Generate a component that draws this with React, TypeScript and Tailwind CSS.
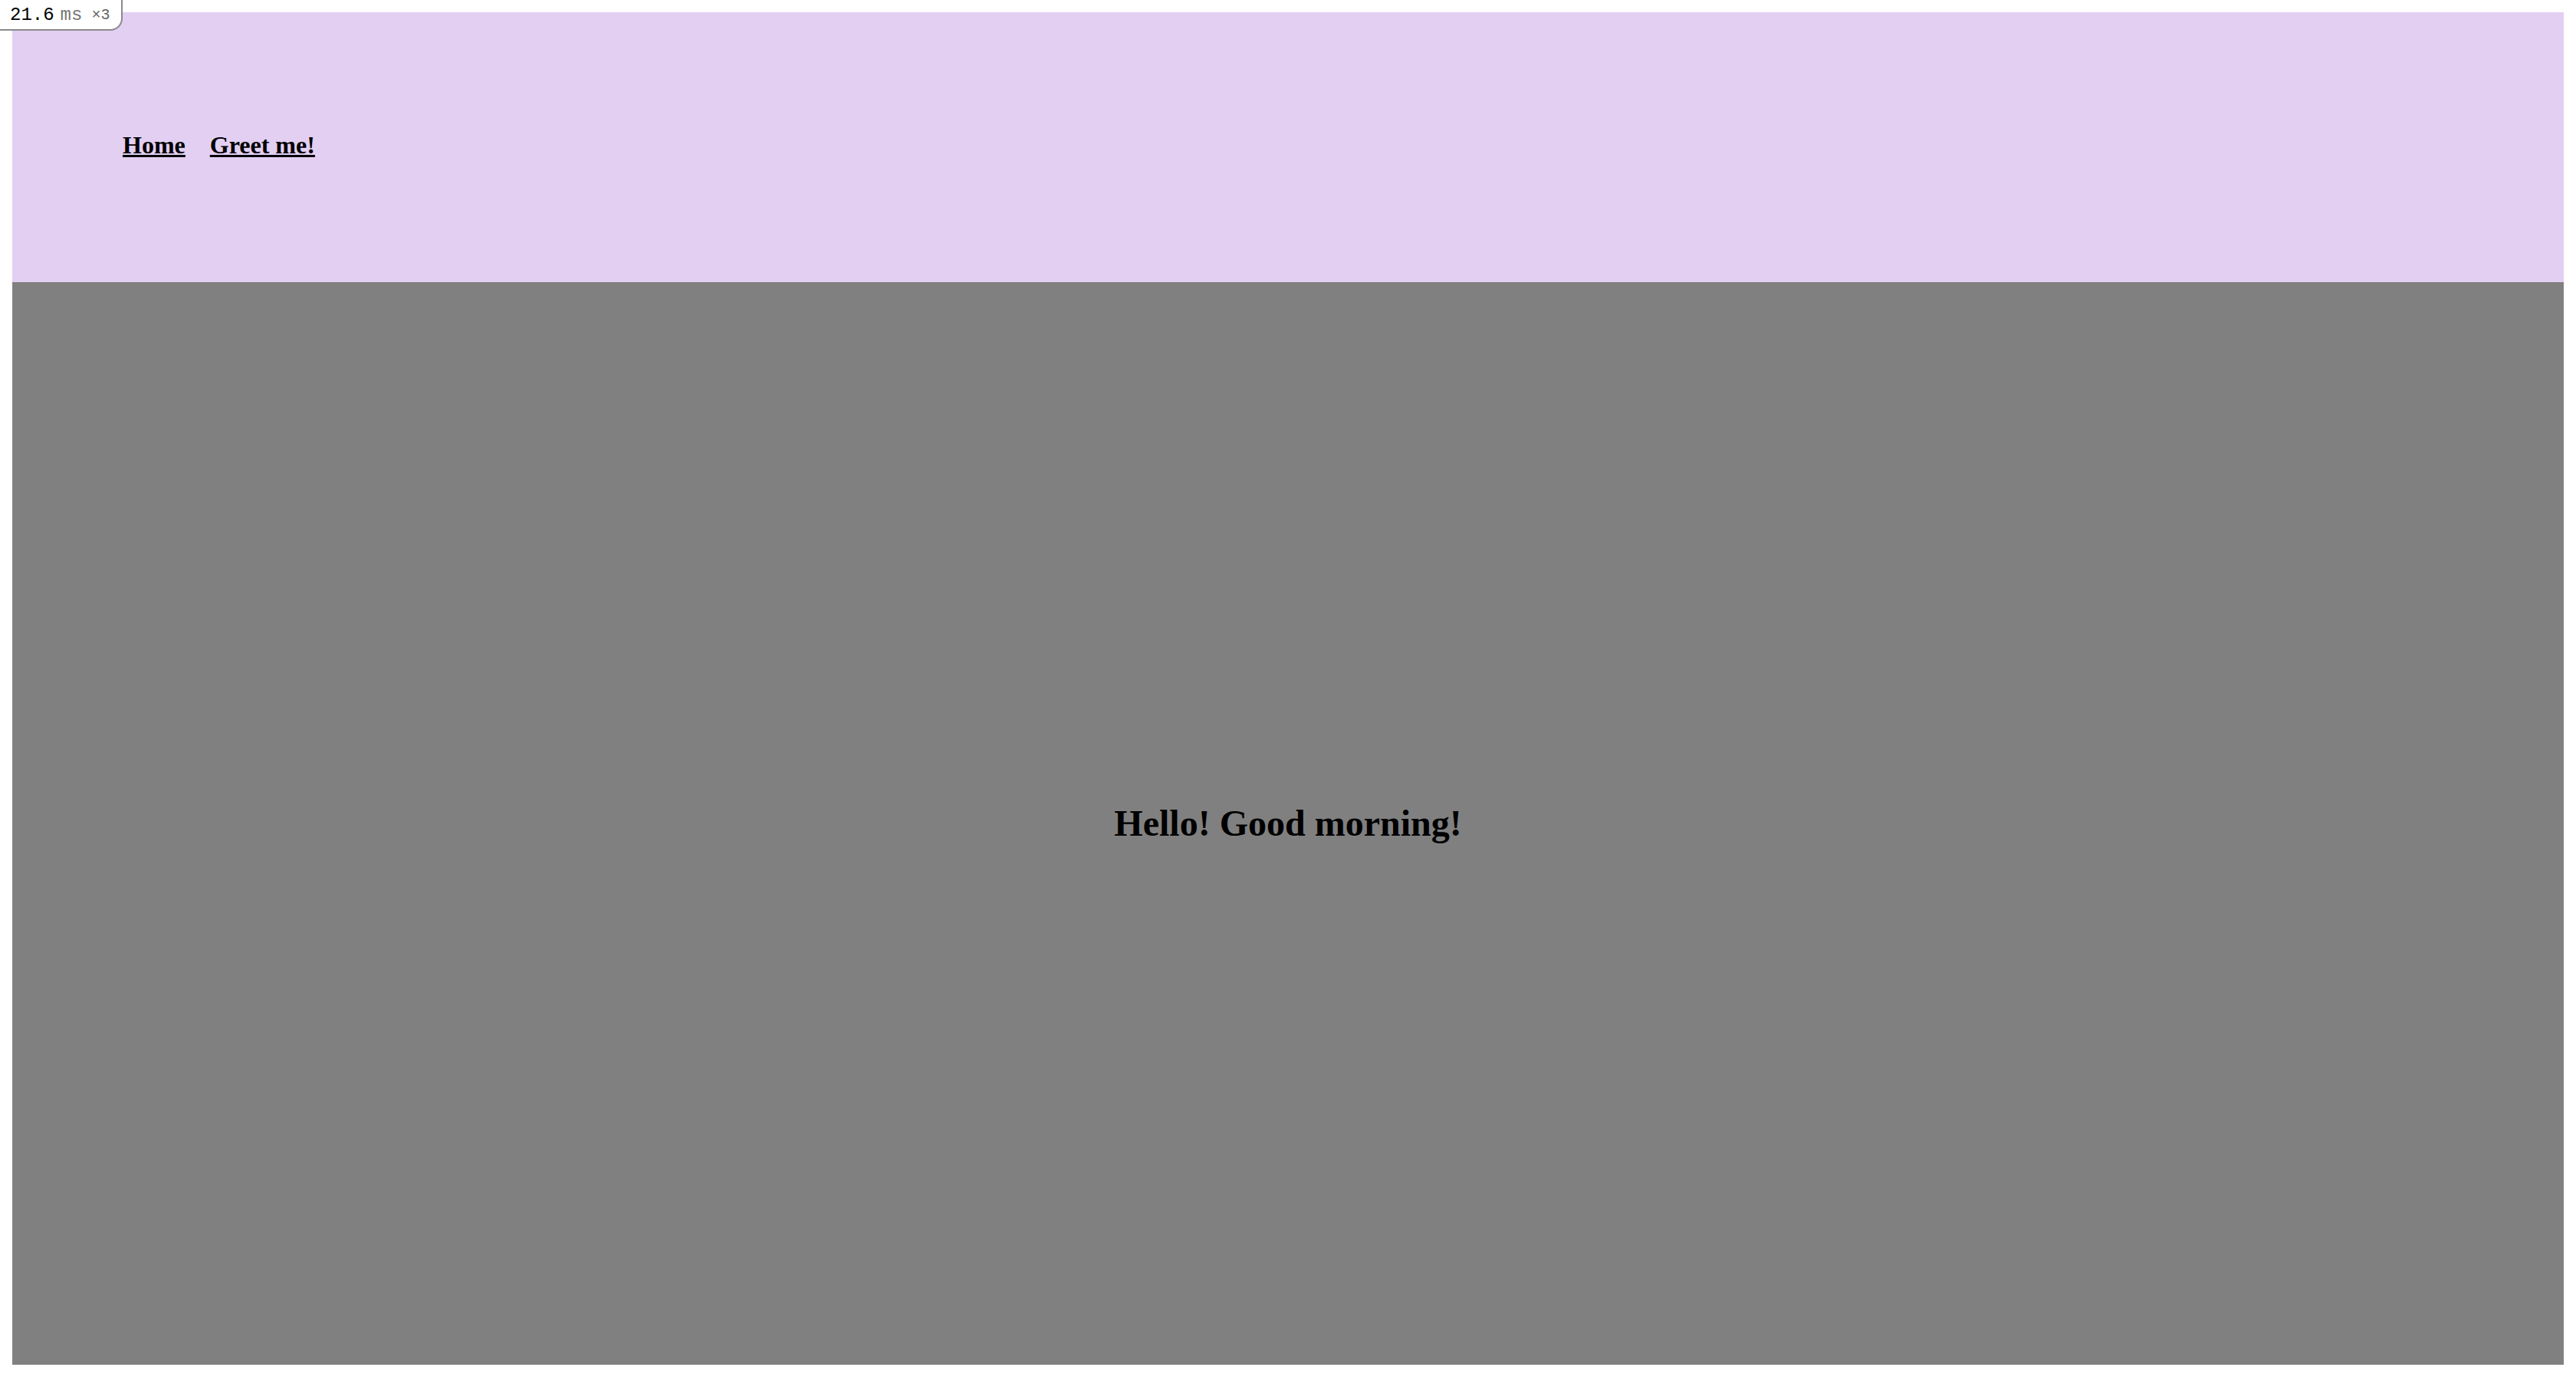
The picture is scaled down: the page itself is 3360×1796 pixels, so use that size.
import React from 'react';

function TimingBadge() {
  return (
    <div className="absolute left-0 top-0 z-10 flex h-10 w-40 items-center gap-2 rounded-br-2xl border-2 border-l-0 border-t-0 border-[#8a8a8a] bg-white pl-[13px] pt-[2px] font-['Liberation_Mono',monospace] leading-none">
      <span className="text-[24px] text-black">21.6</span>
      <span className="text-[24px] text-[#777]">ms</span>
      <span className="ml-1 text-[20px] text-[#666]">×3</span>
    </div>
  );
}

export default function App() {
  const links = ['Home', 'Greet me!'];

  return (
    <div className="relative flex min-h-[1796px] flex-col bg-white p-4 font-['Liberation_Serif',serif]">
      <TimingBadge />

      {/* Header */}
      <header className="flex h-[352px] items-center gap-8 bg-[#e2cff2] pb-[6px] pl-[144px]">
        {links.map((name) => (
          <a key={name} href="#" className="text-[32px] font-bold text-black underline">
            {name}
          </a>
        ))}
      </header>

      {/* Content */}
      <main className="flex flex-1 items-center justify-center bg-[#808080]">
        <h2 className="text-[48px] font-bold text-black">Hello! Good morning!</h2>
      </main>
    </div>
  );
}
